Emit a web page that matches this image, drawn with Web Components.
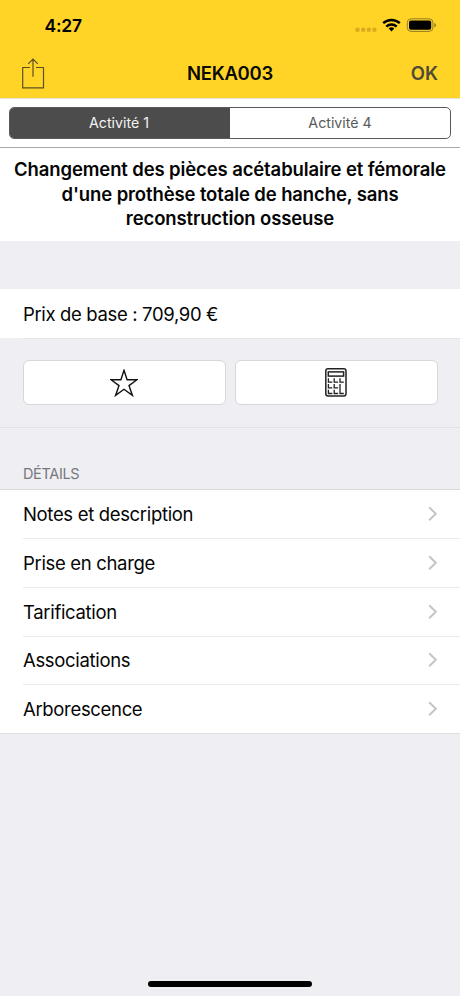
<!DOCTYPE html>
<html lang="fr">
<head>
<meta charset="utf-8">
<meta name="viewport" content="width=device-width, initial-scale=1">
<title>NEKA003</title>
<style>
  html, body {
    margin: 0;
    height: 100%;
  }
  body {
    overflow: hidden;
    font-family: Inter, "Liberation Sans", sans-serif;
    color: #050505;
  }
</style>
</head>
<body>
<app-screen>
  <status-bar slot="header">4:27</status-bar>
  <nav-bar slot="header">NEKA003<span slot="action">OK</span></nav-bar>
  <segmented-control>
    <segment-item selected>Activité 1</segment-item>
    <segment-item>Activité 4</segment-item>
  </segmented-control>
  <act-title>Changement des pièces acétabulaire et fémorale d'une prothèse totale de hanche, sans reconstruction osseuse</act-title>
  <price-row>Prix de base : 709,90 €</price-row>
  <action-bar>
    <action-button>
      <svg width="28" height="28" viewBox="0 0 28 28" fill="none" stroke="#111" stroke-width="1.4">
        <path d="M14 1.3 17.1 10.7H27L19 16.6l3.4 9.8-8.4-6.1-8.4 6.1L9 16.6 1 10.7h9.9z"/>
      </svg>
    </action-button>
    <action-button>
      <svg width="22" height="29" viewBox="0 0 22 29" fill="none" stroke="#222" stroke-width="1.3">
        <rect x=".8" y=".8" width="20.2" height="27.2" rx="2.2" stroke-width="1.5"/>
        <rect x="3.3" y="3.9" width="15.3" height="4.2" stroke-width="1.5"/>
        <path d="M3.4 10.3v3.8h3.9M9.2 10.3v3.8h3.9M15 10.3v3.8h3.8M3.4 16v3.8h3.9M9.2 16v3.8h3.9M3.4 21.7v3.8h3.9M9.2 21.7v3.8h3.9M15 16v9.5h3.8"/>
      </svg>
    </action-button>
  </action-bar>
  <detail-list>
    <span slot="title">DÉTAILS</span>
    <detail-row>Notes et description</detail-row>
    <detail-row>Prise en charge</detail-row>
    <detail-row>Tarification</detail-row>
    <detail-row>Associations</detail-row>
    <detail-row>Arborescence</detail-row>
  </detail-list>
  <home-indicator slot="footer"></home-indicator>
</app-screen>

<script>
const define = (name, html) => {
  const template = document.createElement('template')
  template.innerHTML = html

  window.customElements.define(name, class extends HTMLElement {
    constructor () {
      super()
      this.attachShadow({ mode: 'open' })
      this.shadowRoot.appendChild(template.content.cloneNode(true))
    }
  })
}

define('app-screen', `
  <style>
    :host {
      display: flex;
      flex-direction: column;
      height: 996px;
      background: #efeef3;
    }
    header {
      box-sizing: border-box;
      height: 98px;
      background: #ffd426;
    }
    main {
      flex: 1;
    }
  </style>
  <header><slot name="header"></slot></header>
  <main><slot></slot></main>
  <slot name="footer"></slot>
`)

define('status-bar', `
  <style>
    :host {
      box-sizing: border-box;
      display: flex;
      align-items: center;
      justify-content: space-between;
      height: 50px;
      padding: 0 23.5px 0 44.5px;
      font-size: 17.5px;
      font-weight: 600;
      letter-spacing: -.2px;
      color: #000;
    }
  </style>
  <span><slot></slot></span>
  <svg width="82" height="16" viewBox="0 0 82 16">
    <g fill="#d7aa20">
      <rect x="0.5" y="10.7" width="4" height="4" rx="1"/>
      <rect x="6.2" y="10.7" width="4" height="4" rx="1"/>
      <rect x="11.8" y="10.7" width="4" height="4" rx="1"/>
      <rect x="17.4" y="10.7" width="4" height="4" rx="1"/>
    </g>
    <g fill="none" stroke="#000" stroke-width="2.4">
      <path d="M28.2 6.2a12.2 12.2 0 0 1 16.6 0"/>
      <path d="M31.3 9.6a7.4 7.4 0 0 1 10.4 0"/>
    </g>
    <path d="M33.7 11.6a4.2 4.2 0 0 1 5.6 0L36.5 14.4z"/>
    <rect x="52.3" y="1.8" width="25.6" height="12.6" rx="3.8" fill="none" stroke="#907b28"/>
    <rect x="54" y="3.5" width="22.2" height="9.2" rx="2"/>
    <path d="M79.3 6c2.2.7 2.2 3.7 0 4.4z" fill="#907b28"/>
  </svg>
`)

define('nav-bar', `
  <style>
    :host {
      box-sizing: border-box;
      display: grid;
      grid-template-columns: 1fr auto 1fr;
      align-items: center;
      height: 48px;
      padding: 0 22px 2px;
      font-size: 18.5px;
      font-weight: 600;
      color: #0a0a05;
    }
    .title {
      letter-spacing: -.3px;
    }
    .action {
      justify-self: end;
      color: #504b35;
    }
  </style>
  <svg width="23" height="32" viewBox="0 0 23 32" fill="none" stroke="#5b4f24" stroke-width="1.2">
    <path d="M8 10.5H.7v20.3h20.8V10.5H14M11 19.8V2M6.2 6.8 11 2l4.8 4.8"/>
  </svg>
  <span class="title"><slot></slot></span>
  <span class="action"><slot name="action"></slot></span>
`)

define('segmented-control', `
  <style>
    :host {
      box-sizing: border-box;
      display: block;
      height: 50px;
      padding: 8px 9px;
      background: #fff;
      border-top: 1px solid #e5e1d5;
      border-bottom: 1px solid #a9a9a9;
    }
    .track {
      box-sizing: border-box;
      display: grid;
      grid-template-columns: 1fr 1fr;
      height: 32px;
      overflow: hidden;
      border: 1px solid #5a5a5a;
      border-radius: 5px;
    }
  </style>
  <div class="track"><slot></slot></div>
`)

define('segment-item', `
  <style>
    :host {
      display: flex;
      align-items: center;
      justify-content: center;
      padding-bottom: 1px;
      font-size: 14.2px;
      color: #5a5a5a;
    }
    :host([selected]) {
      padding-right: 2px;
      background: #4c4c4c;
      color: #f2f2f2;
    }
  </style>
  <slot></slot>
`)

define('act-title', `
  <style>
    :host {
      box-sizing: border-box;
      display: block;
      height: 93px;
      padding: 9px 8px 0;
      background: #fff;
      font-size: 18.5px;
      line-height: 24.5px;
      font-weight: 600;
      letter-spacing: -.12px;
      text-align: center;
    }
  </style>
  <slot></slot>
`)

define('price-row', `
  <style>
    :host {
      box-sizing: border-box;
      display: flex;
      align-items: center;
      height: 49px;
      margin-top: 48px;
      padding-left: 23px;
      background: #fff;
      font-size: 18.5px;
      letter-spacing: -.35px;
    }
  </style>
  <span><slot></slot></span>
`)

define('action-bar', `
  <style>
    :host {
      box-sizing: border-box;
      display: grid;
      grid-template-columns: 1fr 1fr;
      gap: 9px;
      height: 90px;
      padding: 22px 22.5px 0;
      border-bottom: 1px solid #e2e2e6;
      background: linear-gradient(#e4e4e8, #e4e4e8) 23px 0 / 100% 1px no-repeat;
    }
  </style>
  <slot></slot>
`)

define('action-button', `
  <style>
    :host {
      display: block;
      height: 45px;
    }
    button {
      box-sizing: border-box;
      display: flex;
      align-items: center;
      justify-content: center;
      width: 100%;
      height: 100%;
      padding: 0;
      border: 1.5px solid #d7d7db;
      border-radius: 6px;
      background: #fff;
    }
  </style>
  <button type="button"><slot></slot></button>
`)

define('detail-list', `
  <style>
    :host {
      display: block;
    }
    .title {
      box-sizing: border-box;
      height: 61px;
      padding: 36px 23px 0;
      font-size: 14.5px;
      line-height: 20px;
      letter-spacing: -.35px;
      color: #77777b;
    }
    .rows {
      border-top: 1px solid #d9d9dc;
      border-bottom: 1px solid #dededf;
      background: #fff;
    }
  </style>
  <div class="title"><slot name="title"></slot></div>
  <div class="rows"><slot></slot></div>
`)

define('detail-row', `
  <style>
    :host {
      box-sizing: border-box;
      display: flex;
      align-items: center;
      justify-content: space-between;
      height: 48.85px;
      margin-left: 23px;
      padding-right: 22px;
      border-bottom: 1px solid #eaeaec;
      font-size: 18.5px;
      letter-spacing: -.33px;
    }
    :host(:last-of-type) {
      height: 47.8px;
      border-bottom: 0;
    }
  </style>
  <span><slot></slot></span>
  <svg width="10" height="16" viewBox="0 0 10 16" fill="none" stroke="#c5c5c8" stroke-width="2">
    <path d="M1.2 1.3 7.8 7.8 1.2 14.3"/>
  </svg>
`)

define('home-indicator', `
  <style>
    :host {
      display: block;
      align-self: center;
      width: 164px;
      height: 6px;
      margin-bottom: 9px;
      border-radius: 3px;
      background: #000;
    }
  </style>
`)
</script>
</body>
</html>
